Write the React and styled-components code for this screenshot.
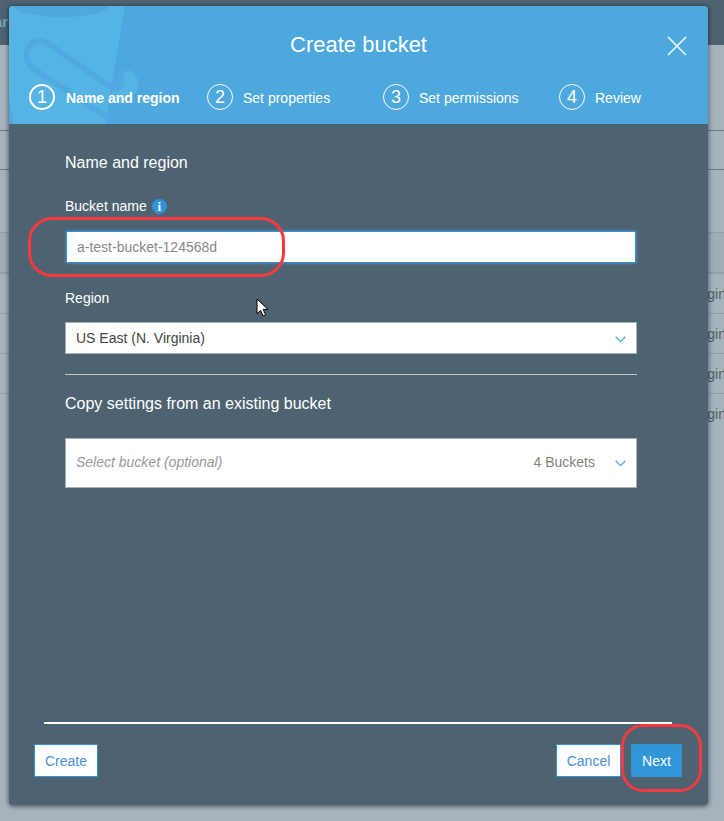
import React from 'react';
import styled, { createGlobalStyle } from 'styled-components';

const Global = createGlobalStyle`
  html, body { margin: 0; padding: 0; }
  body { font-family: "Liberation Sans", Arial, sans-serif; background: #a7b3bb; }
  * { box-sizing: border-box; }
`;
const Page = styled.div`
  position: relative;
  width: 724px;
  height: 821px;
  overflow: hidden;
  background: #a7b3bb;
`;
const TopBar = styled.div`
  height: 45px;
  background: #4e6372;
  color: #6fa9b6;
  font-size: 15px;
  font-weight: bold;
  line-height: 44px;
  overflow: hidden;
  white-space: nowrap;
`;
const TopBarText = styled.span`
  margin-left: -6px;
`;
const BackLine = styled.div`
  height: ${(p) => p.$h}px;
  border-bottom: 1px solid ${(p) => (p.$dark ? '#6d7a84' : '#939fa8')};
`;
const BackBand = styled.div`
  height: 41px;
  background: #a1adb5;
  border-bottom: 2px solid #939fa8;
`;
const BackRow = styled.div`
  height: 40px;
  border-bottom: ${(p) => (p.$last ? 'none' : '1px solid #939fa8')};
  display: flex;
  justify-content: flex-end;
  align-items: center;
  font-size: 14px;
  color: #4e5b64;
  overflow: hidden;
`;
const BackText = styled.span`
  white-space: nowrap;
  margin-right: -2px;
`;
const Modal = styled.section`
  position: absolute;
  left: 9px;
  top: 6px;
  width: 699px;
  height: 799px;
  background: #4e6372;
  border-radius: 4px;
  box-shadow: 0 1px 4px 1px rgba(0, 0, 0, 0.45);
  display: flex;
  flex-direction: column;
  overflow: hidden;
`;
const Header = styled.header`
  position: relative;
  height: 118px;
  flex: none;
  background: #4da8dd;
  color: #fff;
  overflow: hidden;
`;
const BucketArt = styled.svg`
  position: absolute;
  left: 0;
  top: 0;
`;
const Title = styled.h1`
  position: relative;
  margin: 0;
  padding-top: 26px;
  height: 77px;
  text-align: center;
  font-size: 22px;
  line-height: 26px;
  font-weight: normal;
`;
const CloseButton = styled.svg`
  position: absolute;
  right: 21px;
  top: 30px;
`;
const Steps = styled.ol`
  position: relative;
  list-style: none;
  margin: 0;
  padding: 0 0 0 20px;
  display: grid;
  grid-template-columns: 178px repeat(3, 176px);
`;
const Step = styled.li`
  display: flex;
  align-items: center;
  gap: ${(p) => (p.$active ? '11px' : '10px')};
  height: 28px;
  font-size: 14px;
  font-weight: ${(p) => (p.$active ? 'bold' : 'normal')};
`;
const StepNum = styled.span`
  width: 26px;
  height: 26px;
  flex: none;
  border-radius: 50%;
  border: ${(p) => (p.$active ? '2px' : '1px')} solid #fff;
  display: flex;
  align-items: center;
  justify-content: center;
  font-size: 18px;
  font-weight: normal;
`;
const StepLabel = styled.span`
  margin-top: 2px;
`;
const Body = styled.div`
  flex: 1;
  padding: 29px 71px 0 56px;
  color: #fff;
  display: flex;
  flex-direction: column;
`;
const Heading = styled.h2`
  margin: ${(p) => p.$top || 0}px 0 0;
  font-size: 16px;
  line-height: 20px;
  font-weight: normal;
`;
const Label = styled.label`
  display: flex;
  align-items: center;
  gap: 5px;
  font-size: 14px;
  line-height: 18px;
  margin-top: ${(p) => p.$top}px;
`;
const InfoDot = styled.span`
  width: 15px;
  height: 15px;
  border-radius: 50%;
  background: #2f93d6;
  color: #fff;
  font: bold 13px/15px "Liberation Serif", serif;
  text-align: center;
`;
const NameInput = styled.input`
  display: block;
  margin: 16px 1px 0 1px;
  width: 570px;
  height: 32px;
  border: 1px solid #2f93d6;
  box-shadow: 0 0 3px rgba(90, 170, 225, 0.7);
  padding: 0 10px;
  font: 14px "Liberation Sans", Arial, sans-serif;
  color: #888;
  outline: none;
  &::placeholder { color: #888; opacity: 1; }
`;
const Select = styled.div`
  display: flex;
  align-items: center;
  width: 572px;
  height: ${(p) => p.$h}px;
  margin-top: ${(p) => p.$top}px;
  background: #fff;
  border: 1px solid #a9aeb2;
  padding: 0 10px ${(p) => (p.$muted ? '2px' : '0')};
  font-size: 14px;
  color: ${(p) => (p.$muted ? '#999' : '#444')};
  font-style: ${(p) => (p.$muted ? 'italic' : 'normal')};
`;
const Grow = styled.span`
  flex: 1;
`;
const Count = styled.span`
  font-style: normal;
  color: #857f7a;
  margin-right: 20px;
`;
const ChevronIcon = styled.svg`
  margin-top: 2px;
`;
const Divider = styled.hr`
  width: 572px;
  height: 1px;
  border: 0;
  margin: 20px 0 0;
  background: #c6c6c6;
`;
const Footer = styled.footer`
  flex: none;
  height: 83px;
  padding: 0 26px 0 25px;
`;
const FootRule = styled.div`
  width: 628px;
  height: 2px;
  margin-left: 10px;
  background: #fff;
`;
const ButtonRow = styled.div`
  display: flex;
  align-items: flex-start;
  margin-top: 20px;
`;
const Button = styled.button`
  height: 33px;
  width: ${(p) => p.$w}px;
  margin-left: ${(p) => p.$ml || 0}px;
  border: 1px solid #2f93d6;
  background: ${(p) => (p.$primary ? '#3096d6' : '#fff')};
  color: ${(p) => (p.$primary ? '#fff' : '#4a90d6')};
  font: 14px "Liberation Sans", Arial, sans-serif;
  padding: 0;
`;
const Annotation = styled.div`
  position: absolute;
  left: ${(p) => p.$x}px;
  top: ${(p) => p.$y}px;
  width: ${(p) => p.$w}px;
  height: ${(p) => p.$h}px;
  border: 3px solid #f8383f;
  border-radius: ${(p) => p.$r}px;
`;
const Cursor = styled.svg`
  position: absolute;
  left: 256px;
  top: 298px;
`;

const Chevron = () => (
  <ChevronIcon width="11" height="7" viewBox="0 0 11 7" fill="none">
    <path d="M0.7 0.8 L5.5 5.6 L10.3 0.8" stroke="#4da8dd" strokeWidth="1.3" />
  </ChevronIcon>
);

export default function App() {
  return (
    <Page>
      <Global />
      <TopBar><TopBarText>ar</TopBarText></TopBar>
      <BackLine $h={86} $dark />
      <BackLine $h={39} $dark />
      <BackLine $h={63} />
      <BackBand />
      <BackRow><BackText>gin</BackText></BackRow>
      <BackRow><BackText>gin</BackText></BackRow>
      <BackRow><BackText>gin</BackText></BackRow>
      <BackRow $last><BackText>gin</BackText></BackRow>
      <Modal>
        <Header>
          <BucketArt width="135" height="118" viewBox="0 0 135 118" fill="none">
            <path d="M0 0 H116 L96 118 H5 C3 110 1 100 0 90 Z" fill="#55b4e4" />
            <ellipse cx="52" cy="0" rx="47" ry="11" fill="#4ea9dd" />
            <path d="M114 67 C118 62 126 64 129 75 C131 85 127 90 108 97 L100 90 Z" fill="#55b4e4" />
            <path d="M113 66 C110 70 115 76 110 81 C107 84 102 81 98 78 L38 37 C30 32 20 36 18 45 C16 53 20 59 26 64 L96 110"
              stroke="#4fabdf" strokeWidth="6" strokeLinecap="round" />
          </BucketArt>
          <Title>Create bucket</Title>
          <CloseButton width="20" height="20" viewBox="0 0 20 20" fill="none">
            <path d="M1 1 L19 19 M19 1 L1 19" stroke="#e9f4fb" strokeWidth="1.7" />
          </CloseButton>
          <Steps>
            <Step $active><StepNum $active>1</StepNum><StepLabel>Name and region</StepLabel></Step>
            <Step><StepNum>2</StepNum><StepLabel>Set properties</StepLabel></Step>
            <Step><StepNum>3</StepNum><StepLabel>Set permissions</StepLabel></Step>
            <Step><StepNum>4</StepNum><StepLabel>Review</StepLabel></Step>
          </Steps>
        </Header>
        <Body>
          <Heading>Name and region</Heading>
          <Label $top={24}>Bucket name <InfoDot>i</InfoDot></Label>
          <NameInput placeholder="a-test-bucket-124568d" />
          <Label $top={26}>Region</Label>
          <Select $h={32} $top={15}>
            <Grow>US East (N. Virginia)</Grow>
            <Chevron />
          </Select>
          <Divider />
          <Heading $top={19}>Copy settings from an existing bucket</Heading>
          <Select $h={50} $top={24} $muted>
            <Grow>Select bucket (optional)</Grow>
            <Count>4 Buckets</Count>
            <Chevron />
          </Select>
        </Body>
        <Footer>
          <FootRule />
          <ButtonRow>
            <Button $w={64}>Create</Button>
            <Grow />
            <Button $w={65}>Cancel</Button>
            <Button $w={51} $ml={10} $primary>Next</Button>
          </ButtonRow>
        </Footer>
      </Modal>
      <Annotation $x={28} $y={217} $w={257} $h={60} $r={24} />
      <Annotation $x={621} $y={724} $w={81} $h={68} $r={22} />
      <Cursor width="14" height="20" viewBox="0 0 14 20">
        <path d="M1 1 V15.5 L4.6 12.4 L7 18 L9.6 16.8 L7.2 11.4 H12 Z" fill="#fff" stroke="#000" strokeWidth="1" />
      </Cursor>
    </Page>
  );
}
